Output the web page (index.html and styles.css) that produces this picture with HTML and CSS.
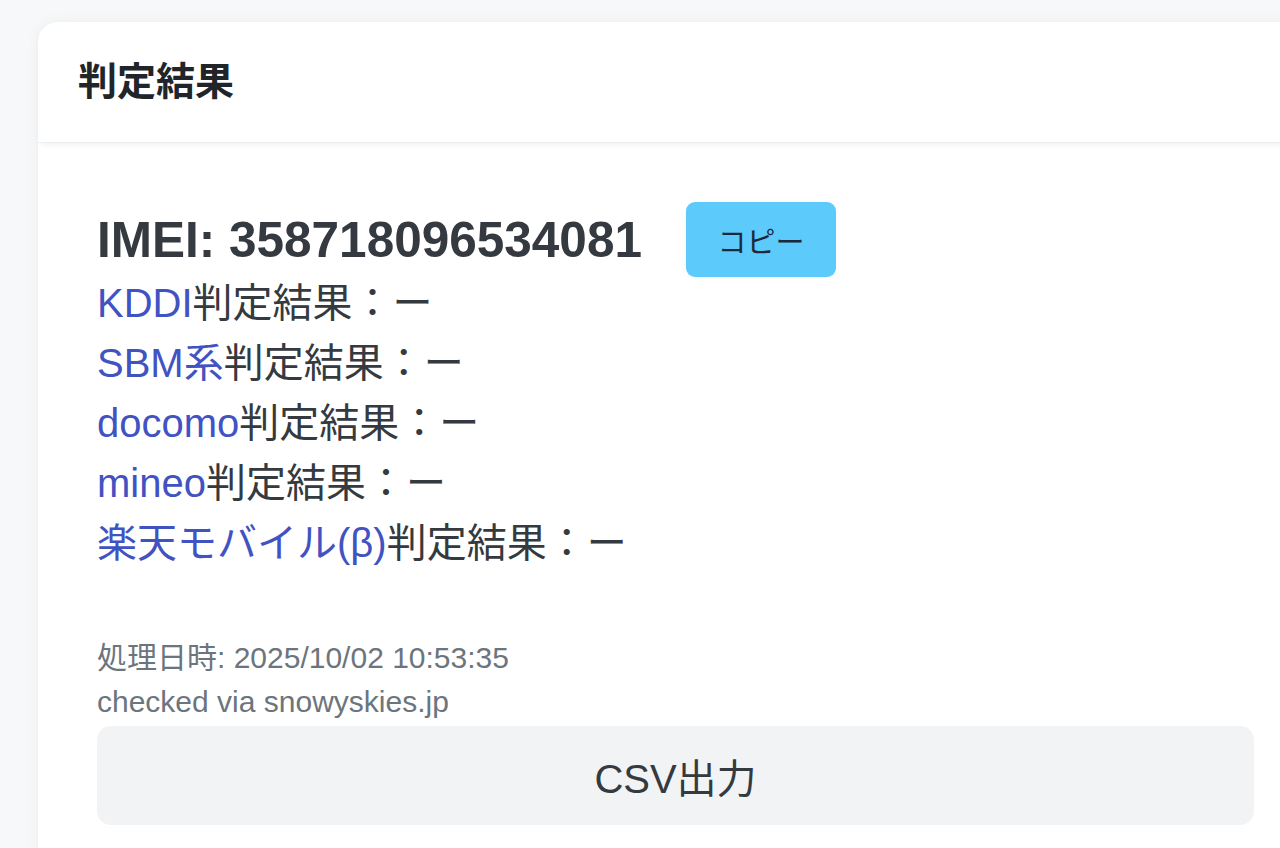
FILE: index.html
```html
<!doctype html>
<html lang="ja">
  <head>
    <meta charset="UTF-8" />
    <meta name="viewport" content="width=device-width, initial-scale=1.0" />
    <title>判定結果</title>
    <link rel="stylesheet" href="styles.css">
  </head>
  <body>
    <div class="result-card">
      <div class="card-header">判定結果</div>

      <div class="card-body">
        <div class="imei-row">
          <span class="imei">IMEI: 358718096534081</span>
          <button class="btn-copy">コピー</button>
        </div>

        <div class="result-list">
          <div><span class="carrier">KDDI</span>判定結果：ー</div>
          <div><span class="carrier">SBM系</span>判定結果：ー</div>
          <div><span class="carrier">docomo</span>判定結果：ー</div>
          <div><span class="carrier">mineo</span>判定結果：ー</div>
          <div><span class="carrier">楽天モバイル(β)</span>判定結果：ー</div>
        </div>

        <div class="meta">
          <div>処理日時: 2025/10/02 10:53:35</div>
          <div>checked via snowyskies.jp</div>
        </div>

        <button class="btn-csv">CSV出力</button>
      </div>
    </div>
  </body>
</html>
```

FILE: styles.css
```css
:root {
  --bg-color: #f7f8f9; --card-bg: #ffffff; --text-color: #343a40;
  --title-color: #212529; --link-color: #4152c2; --muted-color: #6c757d;
  --copy-bg: #5ccbfb; --csv-bg: #f2f3f5;
}
html, body { margin: 0; padding: 0; overflow: hidden; background-color: var(--bg-color); font-family: "Liberation Sans", "Noto Sans CJK JP", sans-serif; color: var(--text-color); }
.result-card { margin: 22px 0 0 38px; width: 1275px; background-color: var(--card-bg); border-radius: 20px; box-shadow: 0 0 14px rgba(0, 0, 0, 0.05); }
.card-header { height: 121px; box-sizing: border-box; padding: 0 40px 8px; display: flex; align-items: center; font-size: 39px; font-weight: bold; color: var(--title-color); border-bottom: 1px solid #eceef0; box-shadow: 0 5px 6px -3px rgba(0, 0, 0, 0.06); }
.card-body { padding: 59px 59px; }
.imei-row { display: flex; align-items: center; gap: 44px; height: 75px; }
.imei { font-size: 49.5px; font-weight: bold; }
.btn-copy { width: 150px; height: 75px; border: none; border-radius: 9px; background-color: var(--copy-bg); color: #1a2a3c; font-family: inherit; font-size: 29px; box-shadow: 0 0 10px rgba(0, 0, 0, 0.03); }
.result-list { margin-top: -4px; font-size: 40px; line-height: 60px; }
.carrier { color: var(--link-color); }
.meta { margin-top: 63px; font-size: 30px; line-height: 44px; color: var(--muted-color); }
.btn-csv { display: block; width: 100%; height: 99px; margin-top: 2px; border: none; border-radius: 14px; background-color: var(--csv-bg); color: var(--text-color); font-family: inherit; font-size: 40px; }
```
